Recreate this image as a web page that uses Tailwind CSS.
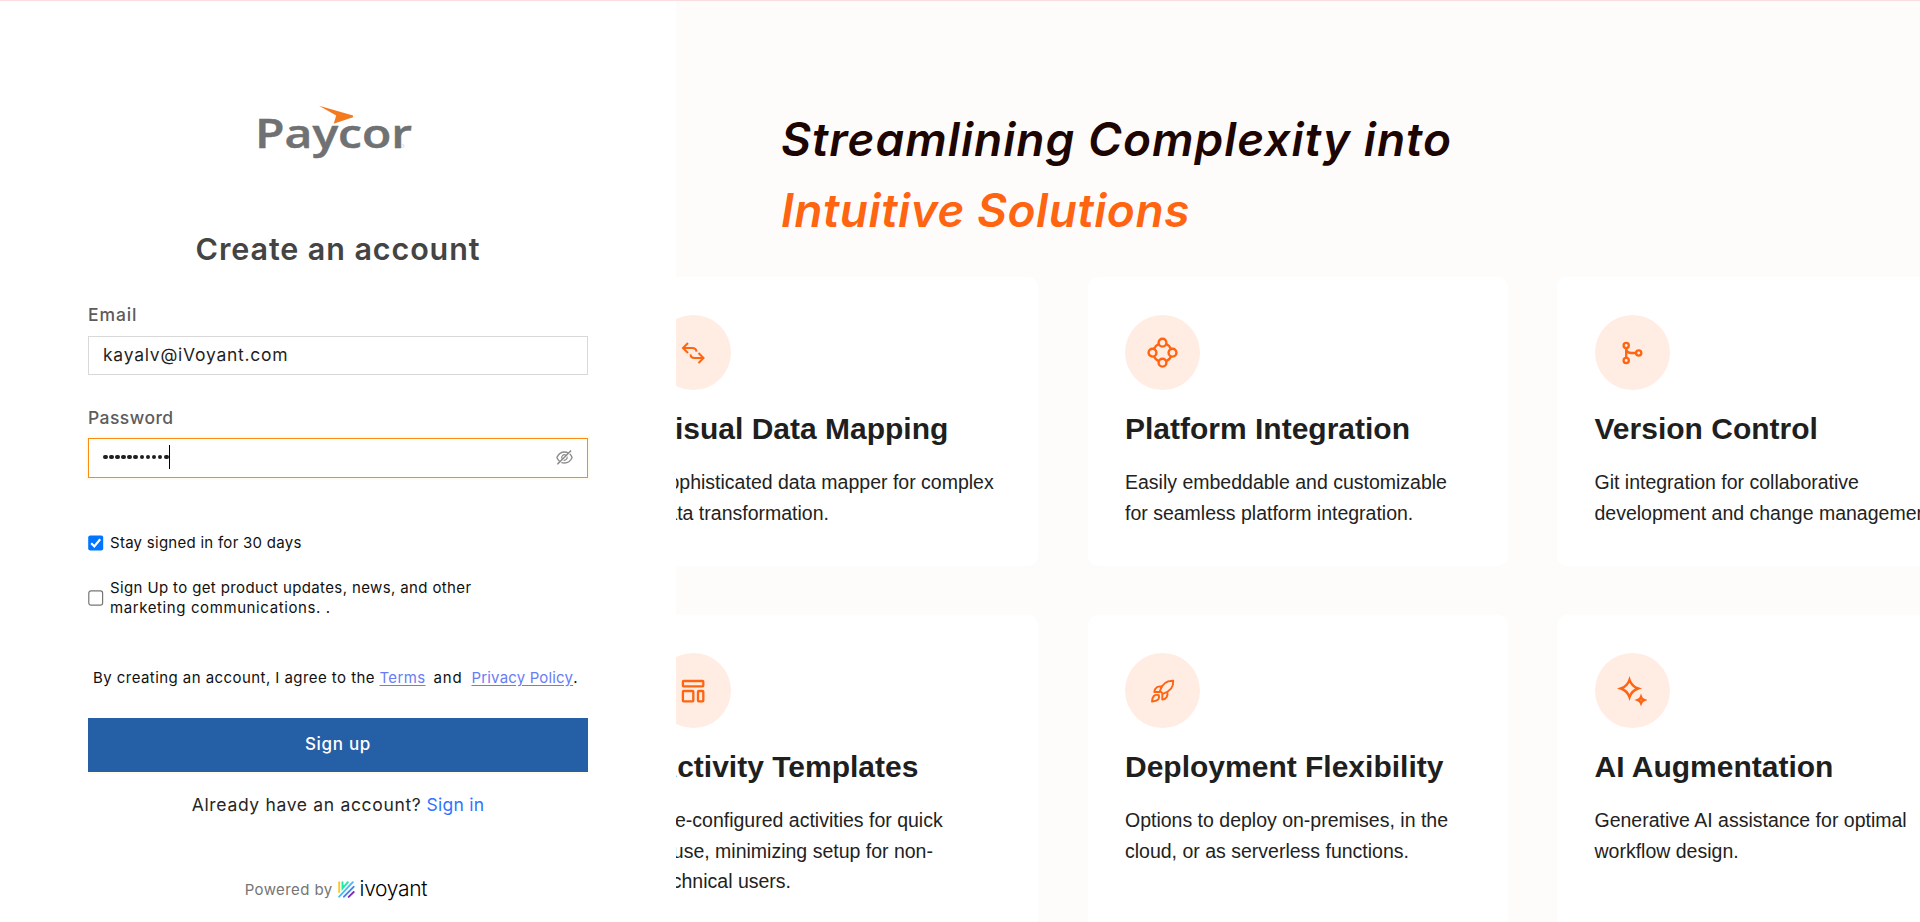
<!DOCTYPE html>
<html lang="en">
<head>
<meta charset="utf-8">
<title>Create an account</title>
<script src="https://cdn.jsdelivr.net/npm/@tailwindcss/browser@4"></script>
</head>
<body class="h-[922px] overflow-hidden border-t border-[#f9dde0] bg-white font-['Inter',sans-serif]">
<div class="flex h-[921px]">
  <main class="flex w-[676px] shrink-0 flex-col items-center px-[88px] pt-[99px]">
    <svg class="h-[60px] w-[170px] shrink-0" viewBox="255 100 170 60">
      <text x="257" y="147.5" textLength="157" lengthAdjust="spacingAndGlyphs" font-family="Open Sans, sans-serif" font-size="40" font-weight="600" fill="#6f7173" stroke="#6f7173" stroke-width=".5">Paycor</text>
      <path d="M321 105.7 355 115.6v1.6L335.7 123.7 338.2 115.4Z" fill="#f47a20"/>
      <circle cx="404.700" cy="146" r="1.4" fill="none" stroke="#c9cacb" stroke-width=".6"/>
    </svg>
    <h1 class="mt-[69px] text-[30.500px] leading-10 font-semibold tracking-[0.9px] text-[#444]">Create an account</h1>
    <form class="mt-[34px] flex w-full flex-col">
      <label class="text-[17.500px] leading-6 font-medium tracking-[0.9px] text-[#5c5c5c]">Email</label>
      <div class="mt-[9px] flex h-[39px] items-center border border-[#d9d9d9] pl-[14px] text-[17.500px] tracking-[0.75px] text-[#1f1f1f]">kayalv@iVoyant.com</div>
      <label class="mt-[31px] text-[17.500px] leading-6 font-medium tracking-[0.45px] text-[#5c5c5c]">Password</label>
      <div class="mt-2 flex h-10 items-center border border-[#fa8c16] pr-[14px] pl-[14px] shadow-[0_0_0_2px_rgba(255,215,5,0.08)]">
        <div class="mb-[2px] flex gap-[1.5px]">
          <i class="size-[4.6px] rounded-full bg-[#1f1f1f]"></i><i class="size-[4.6px] rounded-full bg-[#1f1f1f]"></i><i class="size-[4.6px] rounded-full bg-[#1f1f1f]"></i><i class="size-[4.6px] rounded-full bg-[#1f1f1f]"></i><i class="size-[4.6px] rounded-full bg-[#1f1f1f]"></i><i class="size-[4.6px] rounded-full bg-[#1f1f1f]"></i><i class="size-[4.6px] rounded-full bg-[#1f1f1f]"></i><i class="size-[4.6px] rounded-full bg-[#1f1f1f]"></i><i class="size-[4.6px] rounded-full bg-[#1f1f1f]"></i><i class="size-[4.6px] rounded-full bg-[#1f1f1f]"></i><i class="size-[4.6px] rounded-full bg-[#1f1f1f]"></i>
        </div>
        <i class="mb-[2px] ml-[0.6px] h-6 w-px bg-black"></i>
        <svg class="mb-px ml-auto size-[17px]" viewBox="64 64 896 896" fill="#8c8c8c"><path d="M942.2 486.200Q889.470 375.110 816.700 305l-50.880 50.880C807.310 395.530 843.450 447.400 874.700 512 791.500 684.200 673.400 766 512 766q-72.670 0-133.870-22.380L323 798.750Q408 838 512 838q288.300 0 430.200-300.300a60.290 60.290 0 000-51.500zm-63.570-320.640L836 122.880a8 8 0 00-11.320 0L715.310 232.200Q624.860 186 512 186q-288.300 0-430.200 300.300a60.300 60.300 0 000 51.500q56.690 119.400 136.500 191.410L112.480 835a8 8 0 000 11.310L155.170 889a8 8 0 0011.310 0l712.150-712.120a8 8 0 000-11.320zM149.300 512C232.600 339.800 350.700 258 512 258c54.540 0 104.130 9.360 149.120 28.390l-70.300 70.300a176 176 0 00-238.130 238.130l-83.420 83.420C223.100 637.490 183.300 582.280 149.300 512zm246.700 0a112.110 112.110 0 01146.200-106.690L401.310 546.200A112 112 0 01396 512z"/><path d="M508 624c-3.460 0-6.870-.16-10.250-.47l-52.820 52.820a176.090 176.090 0 00227.420-227.420l-52.820 52.820c.31 3.380.47 6.790.47 10.250a111.940 111.940 0 01-112 112z"/></svg>
      </div>
      <label class="mt-[55px] flex items-center gap-[6px] text-[15px] leading-5 tracking-[0.27px] text-[#111]">
        <svg class="size-[16px] shrink-0" viewBox="0 0 16 16"><rect x=".2" y=".4" width="15" height="15.200" rx="2" fill="#0075ff"/><path d="M3.200 8.300 6.300 11.400 12.200 4.300" fill="none" stroke="#fff" stroke-width="2.200"/></svg>
        Stay signed in for 30 days
      </label>
      <label class="mt-[25px] flex items-center gap-[6px] text-[15px] leading-5 text-[#111]">
        <svg class="size-[16px] shrink-0" viewBox="0 0 16 16"><rect x=".8" y=".8" width="13.800" height="14.400" rx="2.200" fill="#fff" stroke="#767676" stroke-width="1.200"/></svg>
        <span><span class="tracking-[0.37px]">Sign Up to get product updates, news, and other</span><br><span class="tracking-[0.6px]">marketing communications. .</span></span>
      </label>
      <p class="mt-[50px] flex pl-[5px] text-[15px] leading-5 whitespace-nowrap text-[#111]">
        <span class="w-[286.500px] tracking-[0.44px]">By creating an account, I agree to the</span>
        <a class="w-[54px] tracking-[0.35px] text-[#6a7cf5]"><span class="underline underline-offset-2">Terms</span></a>
        <span class="w-[38px] tracking-[0.9px]">and</span>
        <a class="tracking-[0.17px] text-[#6a7cf5] underline underline-offset-2">Privacy Policy</a><span>.</span>
      </p>
      <button type="button" class="mt-[30px] flex h-[54px] items-center justify-center bg-[#255fa6] text-[17px] font-medium tracking-[0.7px] text-white shadow-[0_2px_0_rgba(255,215,5,0.1)]">Sign up</button>
    </form>
    <p class="mt-[21px] flex gap-[5px] text-[17.500px] leading-6 text-[#262626]"><span class="tracking-[0.67px]">Already have an account?</span><a class="tracking-[0.25px] text-[#2f74ff]">Sign in</a></p>
    <div class="mt-[63px] mr-[4px] flex h-5 items-center text-[15px] leading-5 text-[#757575]">
      <span class="tracking-[0.4px]">Powered by</span>
      <svg class="mb-px ml-[5px] h-[17px] w-[17px]" viewBox="0 0 17 17" fill="none" stroke-width="1.900" stroke-linecap="round">
        <path d="M1.200 1.200V11" stroke="#fbc926"/>
        <path d="M4.500 1.200V7.500L9.800 1.200M4.500 4 5.200 5" stroke="#1ceaa8"/>
        <path d="M1.200 15.700 14.800 1.200" stroke="#49bdf5"/>
        <path d="M6 15.700 15.600 5.800" stroke="#4a83e8"/>
        <path d="M10.700 15.900 15.700 11" stroke="#7b2fb5"/>
      </svg>
      <span class="mb-[2px] ml-[5px] text-[21px] font-light tracking-[-0.3px] text-black">ivoyant</span>
    </div>
  </main>

  <section class="flex-1 overflow-hidden bg-[#fdfcfb] pt-[103px]">
    <h2 class="pl-[105px] text-[46px] leading-[71px] font-semibold whitespace-nowrap text-[#1d0502] italic"><span class="tracking-[1.05px]">Streamlining Complexity into</span><br><span class="tracking-[0.560px] text-[#ff6411]">Intuitive Solutions</span></h2>
    <div class="mt-[31px] ml-[-58px] grid w-[1359px] grid-cols-3 gap-x-[49.500px] gap-y-[49px] font-['Liberation_Sans',Arial,sans-serif] text-[19.500px] leading-[30.600px] text-[#222]">
      <article class="h-[289px] rounded-[10px] bg-white pt-[38px] pl-[37.500px]">
        <div class="flex size-[75px] items-center justify-center rounded-full bg-[#ffece3]"><svg class="size-[30px]" viewBox="0 0 30 30" fill="none" stroke="#ff6411" stroke-width="2"><path d="M10 5 5 10l5 5M4.500 10H14q4.300 0 4.500 3.600M20.500 15l5 5-5 5M26 20H16.500q-3.800 0-4-3.600"/></svg></div>
        <h3 class="mt-5 text-[30px] leading-[38px] font-bold text-[#1f1f1f]">Visual Data Mapping</h3>
        <p class="mt-[19px] whitespace-nowrap">Sophisticated data mapper for complex<br>data transformation.</p>
      </article>
      <article class="h-[289px] rounded-[10px] bg-white pt-[38px] pl-[37.500px]">
        <div class="flex size-[75px] items-center justify-center rounded-full bg-[#ffece3]"><svg class="size-[32px]" viewBox="0 0 32 32" fill="none" stroke="#ff6411" stroke-width="2.400"><circle cx="15.500" cy="5.700" r="3.900"/><circle cx="15.500" cy="25.700" r="3.900"/><circle cx="5.500" cy="15.700" r="3.900"/><circle cx="25.500" cy="15.700" r="3.900"/><path d="M11.700 7.200Q8.500 8.500 7 11.900M19.300 7.200Q22.500 8.500 24 11.900M11.700 24.200Q8.500 22.900 7 19.500M19.300 24.200Q22.500 22.900 24 19.500"/></svg></div>
        <h3 class="mt-5 text-[30px] leading-[38px] font-bold text-[#1f1f1f]">Platform Integration</h3>
        <p class="mt-[19px] whitespace-nowrap">Easily embeddable and customizable<br>for seamless platform integration.</p>
      </article>
      <article class="h-[289px] rounded-[10px] bg-white pt-[38px] pl-[37.500px]">
        <div class="flex size-[75px] items-center justify-center rounded-full bg-[#ffece3]"><svg class="size-[30px]" viewBox="0 0 30 30" fill="none" stroke="#ff6411" stroke-width="2.300"><circle cx="9.200" cy="7.500" r="2.600"/><circle cx="9.200" cy="22.500" r="2.600"/><circle cx="21.700" cy="15" r="2.600"/><path d="M9.200 10.200v9.600M9.200 11q.5 4 5.300 4H19"/></svg></div>
        <h3 class="mt-5 text-[30px] leading-[38px] font-bold text-[#1f1f1f]">Version Control</h3>
        <p class="mt-[19px] whitespace-nowrap">Git integration for collaborative<br>development and change management.</p>
      </article>
      <article class="h-[320px] rounded-[10px] bg-white pt-[38px] pl-[37.500px]">
        <div class="flex size-[75px] items-center justify-center rounded-full bg-[#ffece3]"><svg class="size-[30px]" viewBox="0 0 30 30" fill="none" stroke="#ff6411" stroke-width="2.300"><rect x="4.900" y="5" width="20.400" height="5.300" rx=".8"/><rect x="4.900" y="15" width="10.400" height="10.300" rx=".8"/><rect x="20" y="15" width="5.300" height="10.300" rx=".8"/></svg></div>
        <h3 class="mt-5 text-[30px] leading-[38px] font-bold text-[#1f1f1f]">Activity Templates</h3>
        <p class="mt-[19px] whitespace-nowrap">Pre-configured activities for quick<br>reuse, minimizing setup for non-<br>technical users.</p>
      </article>
      <article class="h-[320px] rounded-[10px] bg-white pt-[38px] pl-[37.500px]">
        <div class="flex size-[75px] items-center justify-center rounded-full bg-[#ffece3]"><svg class="size-[30px]" viewBox="0 0 30 30" fill="none" stroke="#ff6411" stroke-width="1.900" stroke-linejoin="round"><path d="M25.200 4.700C19 4.500 14 8 12 14.800L15 17.800C22 15.500 25.700 11 25.200 4.700ZM15 10.600C9.500 9.700 7 11.500 6.300 16h6M19.300 14.900C20.200 20 18.500 23 14.300 23.600V17.500M10.800 19.200C6 18 4.500 20.500 4 25.500 9.500 25 11.800 23.500 10.800 19.200Z"/></svg></div>
        <h3 class="mt-5 text-[30px] leading-[38px] font-bold text-[#1f1f1f]">Deployment Flexibility</h3>
        <p class="mt-[19px] whitespace-nowrap">Options to deploy on-premises, in the<br>cloud, or as serverless functions.</p>
      </article>
      <article class="h-[320px] rounded-[10px] bg-white pt-[38px] pl-[37.500px]">
        <div class="flex size-[75px] items-center justify-center rounded-full bg-[#ffece3]"><svg class="size-[30px]" viewBox="0 0 30 30" fill="none" stroke="#ff6411" stroke-width="2.400"><path d="M12.500 3.800Q14.700 10.300 21.200 12.500 14.700 14.700 12.500 21.200 10.300 14.700 3.800 12.500 10.300 10.300 12.500 3.800Z"/><path d="M24 21Q24.800 23.200 27 24 24.800 24.800 24 27 23.200 24.800 21 24 23.200 23.200 24 21Z"/></svg></div>
        <h3 class="mt-5 text-[30px] leading-[38px] font-bold text-[#1f1f1f]">AI Augmentation</h3>
        <p class="mt-[19px] whitespace-nowrap">Generative AI assistance for optimal<br>workflow design.</p>
      </article>
    </div>
  </section>
</div>
</body>
</html>
